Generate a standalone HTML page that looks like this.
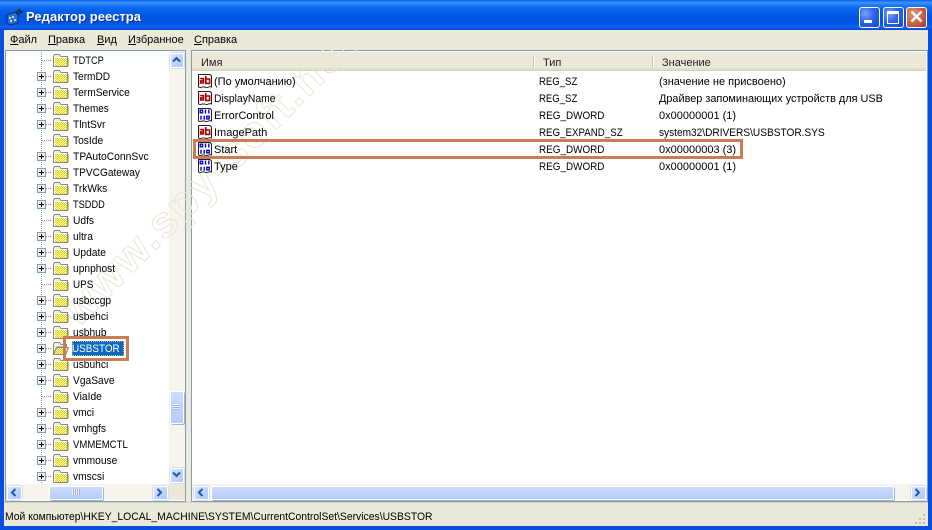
<!DOCTYPE html>
<html lang="ru"><head><meta charset="utf-8"><title>Редактор реестра</title>
<style>
html,body{margin:0;padding:0;background:#0053e1}
#w{position:relative;width:932px;height:530px;overflow:hidden;background:#0a4ee0;font:11px/14px "Liberation Sans",sans-serif;color:#000}
#w div,#w span,#w svg{position:absolute}
#w u{position:static}
.title{left:0;top:0;width:932px;height:30px;background:linear-gradient(#0a55d8 0,#1f7cf5 1px,#3a93ff 3px,#1d7df8 5px,#0a64ee 9px,#0058e8 15px,#0054e2 23px,#0460f4 26px,#0a5ff0 28px,#0046c8 30px)}
.ttl{left:26px;top:8px;font:bold 13px/17px "Liberation Sans",sans-serif;color:#fff;text-shadow:1px 1px 0 #0a2f9c;letter-spacing:.05px;white-space:nowrap}
.btn{top:7px;width:19px;height:19px;border:1px solid #fff;border-radius:3px;background:radial-gradient(circle at 30% 30%,#7fa5f5,#2c63ec 45%,#1747d8)}
.menu{left:4px;top:30px;width:924px;height:20px;background:#ece9d8}
.m{top:33px;white-space:nowrap}
.bg{left:4px;top:50px;width:924px;height:476px;background:#ece9d8}
.tree{left:5px;top:50px;width:179px;height:450px;background:#fff;border:1px solid #7f9db9;overflow:hidden}
.list{left:191px;top:50px;width:735px;height:450px;background:#fff;border:1px solid #7f9db9;overflow:hidden}
.hdr{left:192px;top:51px;width:734px;height:18px;background:#ece9d8;border-bottom:1px solid #d6d2c2;border-top:1px solid #fff;box-shadow:inset 0 -2px 0 #e2decd}
.sep{top:55px;width:1px;height:13px;background:#c7c5b2;border-right:1px solid #fff}
.h{top:56px;white-space:nowrap;color:#222}
.t{left:73px;white-space:nowrap;transform-origin:0 0;transform:scaleX(.93)}
.r{white-space:nowrap;transform-origin:0 0}
.dv{left:41px;width:0;border-left:1px dotted #909090}
.dh{left:41px;width:10px;height:0;border-top:1px dotted #909090}
.p{left:37px;width:9px;height:9px}
.f{left:52px;width:17px;height:14px}
.ri{left:197px;width:16px;height:16px}
.sb{background:#f6f4ec}
.b{background:linear-gradient(135deg,#dbe5fe,#c1d3fb 55%,#b3c8f6);border:1px solid #fff;box-shadow:0 0 0 1px #d4def2;border-radius:2px}
.th{background:linear-gradient(#cddafc,#b6ccfc);border:1px solid #fff;box-shadow:1px 1px 0 #9db3dc;border-radius:2px}
.box{border:3px solid #cb7b55;box-sizing:border-box}
.s84{transform:scaleX(.84)}.s87{transform:scaleX(.87)}.s89{transform:scaleX(.885)}.s90{transform:scaleX(.9)}.s92{transform:scaleX(.92)}.s94{transform:scaleX(.94)}.s99{transform:scaleX(.99)}
</style></head><body>
<div id="w">
<svg width="0" height="0" style="left:0;top:0"><defs>
<pattern id="dz" width="2" height="2" patternUnits="userSpaceOnUse"><rect width="2" height="2" fill="#ffff80"/><rect width="1" height="1" fill="#dcc83a"/><rect x="1" y="1" width="1" height="1" fill="#dcc83a"/></pattern>
<symbol id="fo" viewBox="0 0 17 14"><path d="M1.5 3.5 L2.5 1.5 H7.5 L9 3.5 H15.5 V13.5 H1.5 Z" fill="#f4f2e4" stroke="#8a8a80"/><rect x="3" y="5" width="12" height="8" fill="url(#dz)"/><path d="M2.5 13 V4.5 H15" fill="none" stroke="#fff"/><path d="M16.5 5 V13" stroke="#c4c4b8"/></symbol>
<symbol id="fopen" viewBox="0 0 17 14"><path d="M1.5 3.5 L2.5 1.5 H7.5 L9 3.5 H14.5 V6 H5 L1.5 13 Z" fill="#f4f2e4" stroke="#8a8a80"/><path d="M4.5 6.5 H16.5 L14 13.5 H1.5 Z" fill="url(#dz)" stroke="#8a8a80"/></symbol>
<symbol id="pl" viewBox="0 0 9 9"><rect x=".5" y=".5" width="8" height="8" fill="#efeee6" stroke="#7f9db9"/><path d="M2 4.5H7M4.5 2V7" stroke="#000"/></symbol>
<symbol id="sz" viewBox="0 0 16 16"><path d="M1.5 1.5H13L14.5 3V14C12 12.6 11 15.6 8 14.2C5 12.8 4 15.6 1.5 14Z" fill="#fff" stroke="#222"/><path d="M2.5 12.5V3" stroke="#d0d0d0"/><g fill="none" stroke="#b00000" stroke-width="1.6"><path d="M3.2 5.6H6.5V10.6M6.5 7.9H3.8V10H6.5"/><path d="M8.8 3V10.4H12.6V6H8.8"/></g></symbol>
<symbol id="dw" viewBox="0 0 16 16"><path d="M1.5 1.5H13L14.5 3V14C12 12.6 11 15.6 8 14.2C5 12.8 4 15.6 1.5 14Z" fill="#fff" stroke="#222"/><g fill="none" stroke="#0000e0" stroke-width="1.4"><rect x="3.2" y="3.2" width="2.4" height="2.6"/><path d="M8.5 2.5V6.5M11.8 2.5V6.5M4 8.8V12.8M7.2 8.8V12.8"/><rect x="9.8" y="9.3" width="2.4" height="2.6"/></g></symbol>
<symbol id="up" viewBox="0 0 9 7"><path d="M1 5.5L4.5 2L8 5.5" fill="none" stroke="#1f56ac" stroke-width="2"/></symbol>
<symbol id="dn" viewBox="0 0 9 7"><path d="M1 1.5L4.5 5L8 1.5" fill="none" stroke="#1f56ac" stroke-width="2"/></symbol>
<symbol id="lf" viewBox="0 0 7 9"><path d="M5.5 1L2 4.5L5.5 8" fill="none" stroke="#1a5cb0" stroke-width="2"/></symbol>
<symbol id="rt" viewBox="0 0 7 9"><path d="M1.5 1L5 4.5L1.5 8" fill="none" stroke="#1a5cb0" stroke-width="2"/></symbol>
</defs></svg>

<div class="title"></div>
<svg style="left:6px;top:8px" width="18" height="18" viewBox="0 0 18 18"><path d="M1 7L9 4L12 7V15L4 17L1 15Z" fill="#2a6fd0" stroke="#0a2a70"/><path d="M3 9h2v2H3zM6 8h2v2H6zM4 12h2v2H4zM8 11h2v2H8z" fill="#bcd8f8"/><path d="M10 5L14 1M12 6L17 3M13 2L15 4" stroke="#12284e" stroke-width="1.6"/></svg>
<div class="ttl">Редактор реестра</div>
<div class="btn" style="left:859px"></div><div style="left:864px;top:20px;width:8px;height:3px;background:#fff"></div>
<div class="btn" style="left:883px"></div><div style="left:887px;top:11px;width:10px;height:9px;border:1px solid #fff;border-top:3px solid #fff;box-sizing:content-box"></div>
<div class="btn" style="left:906px;background:radial-gradient(circle at 30% 30%,#dc9478,#c9654a 50%,#a8321c)"></div>
<svg style="left:909px;top:9px" width="15" height="15" viewBox="0 0 15 15"><path d="M2.5 2.5L12.5 12.5M12.5 2.5L2.5 12.5" stroke="#fff" stroke-width="2.4"/></svg>

<div class="bg"></div>
<div class="menu"></div>
<div class="m" style="left:10px"><u>Ф</u>айл</div>
<div class="m" style="left:48px"><u>П</u>равка</div>
<div class="m" style="left:97px"><u>В</u>ид</div>
<div class="m" style="left:128px"><u>И</u>збранное</div>
<div class="m" style="left:194px"><u>С</u>правка</div>

<div class="tree"></div>
<div class="list"></div>

<div class="hdr"></div>
<div class="sep" style="left:533px"></div><div class="sep" style="left:652px"></div>
<div class="h" style="left:201px">Имя</div><div class="h" style="left:543px">Тип</div><div class="h" style="left:662px">Значение</div>

<div class="sb" style="left:169px;top:51px;width:16px;height:433px"></div>

<svg style="left:0;top:30px" width="932" height="500" viewBox="0 0 932 500"><text transform="translate(78 298) rotate(-45)" font-family="Liberation Sans" font-weight="bold" font-size="44" fill="none" stroke="#e9e6d6" stroke-width="1" textLength="395" lengthAdjust="spacing">www.spy-soft.net</text></svg>

<div class="dv" style="top:52px;height:431px"></div>
<div class="dh" style="top:60px"></div><div class="dh" style="top:76px"></div><div class="dh" style="top:92px"></div><div class="dh" style="top:108px"></div><div class="dh" style="top:124px"></div><div class="dh" style="top:140px"></div><div class="dh" style="top:156px"></div><div class="dh" style="top:172px"></div><div class="dh" style="top:188px"></div><div class="dh" style="top:204px"></div><div class="dh" style="top:220px"></div><div class="dh" style="top:236px"></div><div class="dh" style="top:252px"></div><div class="dh" style="top:268px"></div><div class="dh" style="top:284px"></div><div class="dh" style="top:300px"></div><div class="dh" style="top:316px"></div><div class="dh" style="top:332px"></div><div class="dh" style="top:348px"></div><div class="dh" style="top:364px"></div><div class="dh" style="top:380px"></div><div class="dh" style="top:396px"></div><div class="dh" style="top:412px"></div><div class="dh" style="top:428px"></div><div class="dh" style="top:444px"></div><div class="dh" style="top:460px"></div><div class="dh" style="top:476px"></div>

<svg class="p" style="top:72px"><use href="#pl"/></svg><svg class="p" style="top:88px"><use href="#pl"/></svg><svg class="p" style="top:104px"><use href="#pl"/></svg><svg class="p" style="top:120px"><use href="#pl"/></svg><svg class="p" style="top:152px"><use href="#pl"/></svg><svg class="p" style="top:168px"><use href="#pl"/></svg><svg class="p" style="top:184px"><use href="#pl"/></svg><svg class="p" style="top:200px"><use href="#pl"/></svg><svg class="p" style="top:232px"><use href="#pl"/></svg><svg class="p" style="top:248px"><use href="#pl"/></svg><svg class="p" style="top:264px"><use href="#pl"/></svg><svg class="p" style="top:296px"><use href="#pl"/></svg><svg class="p" style="top:312px"><use href="#pl"/></svg><svg class="p" style="top:328px"><use href="#pl"/></svg><svg class="p" style="top:344px"><use href="#pl"/></svg><svg class="p" style="top:360px"><use href="#pl"/></svg><svg class="p" style="top:376px"><use href="#pl"/></svg><svg class="p" style="top:408px"><use href="#pl"/></svg><svg class="p" style="top:424px"><use href="#pl"/></svg><svg class="p" style="top:440px"><use href="#pl"/></svg><svg class="p" style="top:456px"><use href="#pl"/></svg><svg class="p" style="top:472px"><use href="#pl"/></svg>

<svg class="f" style="top:53px"><use href="#fo"/></svg><svg class="f" style="top:69px"><use href="#fo"/></svg><svg class="f" style="top:85px"><use href="#fo"/></svg><svg class="f" style="top:101px"><use href="#fo"/></svg><svg class="f" style="top:117px"><use href="#fo"/></svg><svg class="f" style="top:133px"><use href="#fo"/></svg><svg class="f" style="top:149px"><use href="#fo"/></svg><svg class="f" style="top:165px"><use href="#fo"/></svg><svg class="f" style="top:181px"><use href="#fo"/></svg><svg class="f" style="top:197px"><use href="#fo"/></svg><svg class="f" style="top:213px"><use href="#fo"/></svg><svg class="f" style="top:229px"><use href="#fo"/></svg><svg class="f" style="top:245px"><use href="#fo"/></svg><svg class="f" style="top:261px"><use href="#fo"/></svg><svg class="f" style="top:277px"><use href="#fo"/></svg><svg class="f" style="top:293px"><use href="#fo"/></svg><svg class="f" style="top:309px"><use href="#fo"/></svg><svg class="f" style="top:325px"><use href="#fo"/></svg><svg class="f" style="top:341px"><use href="#fopen"/></svg><svg class="f" style="top:357px"><use href="#fo"/></svg><svg class="f" style="top:373px"><use href="#fo"/></svg><svg class="f" style="top:389px"><use href="#fo"/></svg><svg class="f" style="top:405px"><use href="#fo"/></svg><svg class="f" style="top:421px"><use href="#fo"/></svg><svg class="f" style="top:437px"><use href="#fo"/></svg><svg class="f" style="top:453px"><use href="#fo"/></svg><svg class="f" style="top:469px"><use href="#fo"/></svg>

<div class="t s84" style="top:54px">TDTCP</div>
<div class="t s92" style="top:70px">TermDD</div>
<div class="t" style="top:86px">TermService</div>
<div class="t s90" style="top:102px">Themes</div>
<div class="t" style="top:118px">TlntSvr</div>
<div class="t" style="top:134px">TosIde</div>
<div class="t s94" style="top:150px">TPAutoConnSvc</div>
<div class="t s92" style="top:166px">TPVCGateway</div>
<div class="t" style="top:182px">TrkWks</div>
<div class="t s84" style="top:198px">TSDDD</div>
<div class="t" style="top:214px">Udfs</div>
<div class="t" style="top:230px">ultra</div>
<div class="t" style="top:246px">Update</div>
<div class="t" style="top:262px">upnphost</div>
<div class="t s90" style="top:278px">UPS</div>
<div class="t" style="top:294px">usbccgp</div>
<div class="t" style="top:310px">usbehci</div>
<div class="t" style="top:326px">usbhub</div>
<div style="left:72px;top:341px;width:52px;height:15px;background:#0a68c4;outline:1px dotted #d8c070;outline-offset:-1px"></div>
<div class="t s90" style="left:72px;top:342px;color:#fff">USBSTOR</div>
<div class="t" style="top:358px">usbuhci</div>
<div class="t" style="top:374px">VgaSave</div>
<div class="t" style="top:390px">ViaIde</div>
<div class="t" style="top:406px">vmci</div>
<div class="t" style="top:422px">vmhgfs</div>
<div class="t s87" style="top:438px">VMMEMCTL</div>
<div class="t" style="top:454px">vmmouse</div>
<div class="t" style="top:470px">vmscsi</div>
<div class="box" style="left:63px;top:336px;width:66px;height:25px"></div>

<svg class="ri" style="top:73px"><use href="#sz"/></svg><svg class="ri" style="top:90px"><use href="#sz"/></svg><svg class="ri" style="top:107px"><use href="#dw"/></svg><svg class="ri" style="top:124px"><use href="#sz"/></svg><svg class="ri" style="top:141px"><use href="#dw"/></svg><svg class="ri" style="top:158px"><use href="#dw"/></svg>

<div class="r" style="left:214px;top:75px">(По умолчанию)</div><div class="r s87" style="left:539px;top:75px">REG_SZ</div><div class="r" style="left:659px;top:75px">(значение не присвоено)</div>
<div class="r s94" style="left:214px;top:92px">DisplayName</div><div class="r s87" style="left:539px;top:92px">REG_SZ</div><div class="r s99" style="left:659px;top:92px">Драйвер запоминающих устройств для USB</div>
<div class="r" style="left:214px;top:109px">ErrorControl</div><div class="r s90" style="left:539px;top:109px">REG_DWORD</div><div class="r" style="left:659px;top:109px">0x00000001 (1)</div>
<div class="r" style="left:214px;top:126px">ImagePath</div><div class="r s89" style="left:539px;top:126px">REG_EXPAND_SZ</div><div class="r s92" style="left:659px;top:126px">system32\DRIVERS\USBSTOR.SYS</div>
<div class="r" style="left:214px;top:143px">Start</div><div class="r s90" style="left:539px;top:143px">REG_DWORD</div><div class="r" style="left:659px;top:143px">0x00000003 (3)</div>
<div class="r" style="left:214px;top:160px">Type</div><div class="r s90" style="left:539px;top:160px">REG_DWORD</div><div class="r" style="left:659px;top:160px">0x00000001 (1)</div>
<div class="box" style="left:193px;top:139px;width:550px;height:20px"></div>

<div class="b" style="left:170px;top:53px;width:12px;height:13px"></div><svg style="left:172px;top:56px" width="9" height="7"><use href="#up"/></svg>
<div class="th" style="left:170px;top:391px;width:12px;height:31px"></div>
<div style="left:173px;top:404px;width:6px;height:6px;background:repeating-linear-gradient(#eef3ff 0 1px,#9db3dc 1px 2px)"></div>
<div class="b" style="left:170px;top:468px;width:12px;height:13px"></div><svg style="left:172px;top:471px" width="9" height="7"><use href="#dn"/></svg>

<div class="sb" style="left:6px;top:484px;width:179px;height:16px"></div>
<div class="b" style="left:7px;top:486px;width:13px;height:12px"></div><svg style="left:10px;top:488px" width="7" height="9"><use href="#lf"/></svg>
<div class="th" style="left:49px;top:486px;width:52px;height:12px"></div>
<div style="left:72px;top:489px;width:8px;height:6px;background:repeating-linear-gradient(90deg,#eef3ff 0 1px,#9db3dc 1px 2px)"></div>
<div class="b" style="left:153px;top:486px;width:13px;height:12px"></div><svg style="left:156px;top:488px" width="7" height="9"><use href="#rt"/></svg>
<div style="left:169px;top:484px;width:16px;height:16px;background:#ece9d8"></div>

<div class="sb" style="left:192px;top:484px;width:734px;height:16px"></div>
<div class="b" style="left:194px;top:486px;width:13px;height:12px"></div><svg style="left:197px;top:488px" width="7" height="9"><use href="#lf"/></svg>
<div class="th" style="left:211px;top:486px;width:681px;height:12px"></div>
<div class="b" style="left:911px;top:486px;width:13px;height:12px"></div><svg style="left:914px;top:488px" width="7" height="9"><use href="#rt"/></svg>

<div style="left:4px;top:502px;width:924px;height:1px;background:#d6d2c2"></div>
<div class="r" style="left:5px;top:510px;transform:scaleX(.943)">Мой компьютер\HKEY_LOCAL_MACHINE\SYSTEM\CurrentControlSet\Services\USBSTOR</div>
<svg style="left:915px;top:513px" width="12" height="12" viewBox="0 0 12 12"><path d="M8 1h2v2H8zM4 5h2v2H4zM8 5h2v2H8zM0 9h2v2H0zM4 9h2v2H4zM8 9h2v2H8z" fill="#c4c0ae"/></svg>
</div>
</body></html>
